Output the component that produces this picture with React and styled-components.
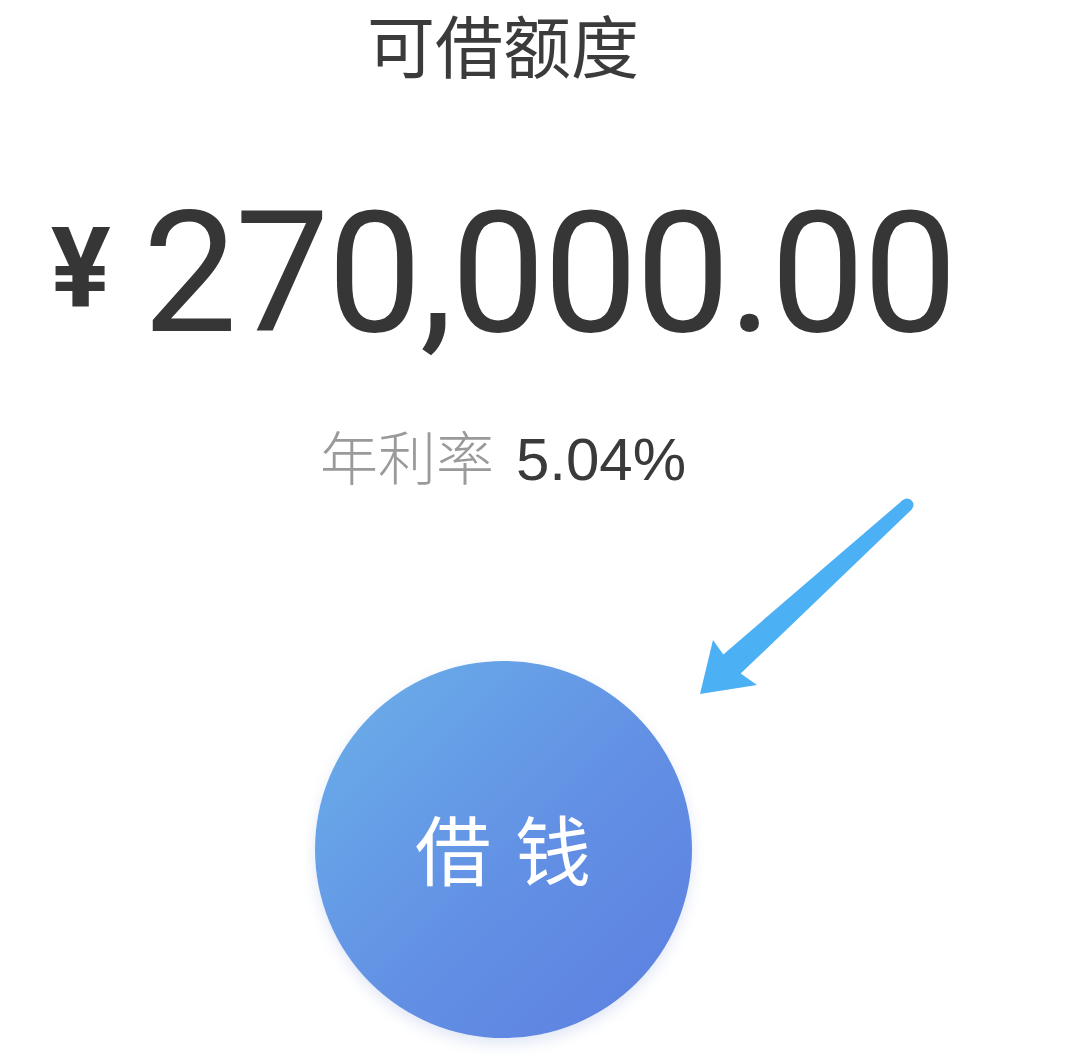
import styled, { createGlobalStyle } from "styled-components"

const Global = createGlobalStyle`
  html, body {
    margin : 0;
    padding : 0;
    background : #ffffff;
  }
`;

const Page = styled.div`
  position : relative;
  width : 1006px;
  height : 1061px;
  display : flex;
  flex-flow : column;
  align-items : center;
  overflow : hidden;
`;

const Title = styled.div`
  margin-top : 6px;
  font-family : "Noto Sans CJK SC", sans-serif;
  font-size : 68px;
  line-height : 76px;
  color : #3b3b3b;
`;

const AmountRow = styled.div`
  margin-top : 108px;
  display : flex;
  align-items : center;
  gap : 32px;
  color : #363636;
`;

const Yen = styled.span`
  font-family : "Roboto", sans-serif;
  font-weight : 700;
  font-size : 112px;
  line-height : 1;
  margin-top : -12px;
`;

const Amount = styled.span`
  font-family : "Roboto", sans-serif;
  font-size : 168px;
  line-height : 1;
  letter-spacing : -2px;
`;

const Rate = styled.div`
  margin-top : 68px;
  display : flex;
  align-items : baseline;
  gap : 22px;
  font-size : 58px;
  line-height : 1;
`;

const RateLabel = styled.span`
  font-family : "Noto Sans CJK SC", sans-serif;
  font-weight : 300;
  color : #9a9a9a;
`;

const RateValue = styled.span`
  font-family : "Liberation Sans", sans-serif;
  font-size : 60px;
  color : #3a3a3a;
`;

const BorrowButton = styled.button`
  margin-top : 171px;
  width : 377px;
  height : 377px;
  border : none;
  border-radius : 50%;
  background : linear-gradient(135deg, #6bb0ea 0%, #6290e4 55%, #5d7fe0 100%);
  box-shadow : 0 6px 14px rgba(90, 120, 200, 0.18);
  display : flex;
  align-items : center;
  justify-content : center;
  padding : 0;
`;

const ButtonText = styled.span`
  font-family : "Noto Sans CJK SC", sans-serif;
  font-weight : 400;
  font-size : 76px;
  letter-spacing : 24px;
  margin-right : -24px;
  color : #ffffff;
  margin-top : -6px;
`;

const Arrow = styled.svg`
  position : absolute;
  left : 690px;
  top : 490px;
  width : 230px;
  height : 215px;
`;

const App = () => {
  return (<>
    <Global />
    <Page>
      <Title>可借额度</Title>
      <AmountRow>
        <Yen>¥</Yen>
        <Amount>270,000.00</Amount>
      </AmountRow>
      <Rate>
        <RateLabel>年利率</RateLabel>
        <RateValue>5.04%</RateValue>
      </Rate>
      <BorrowButton>
        <ButtonText>借钱</ButtonText>
      </BorrowButton>
      <Arrow viewBox="690 490 230 215">
        <circle cx="907" cy="505" r="6.5" fill="#4cb0f5" />
        <path d="M 902.6 500.2 L 723.3 654.4 L 713 640 L 700 694 L 757 685 L 740.7 673.6 L 911.4 509.8 Z" fill="#4cb0f5" />
      </Arrow>
    </Page>
  </>)
}

export default App
